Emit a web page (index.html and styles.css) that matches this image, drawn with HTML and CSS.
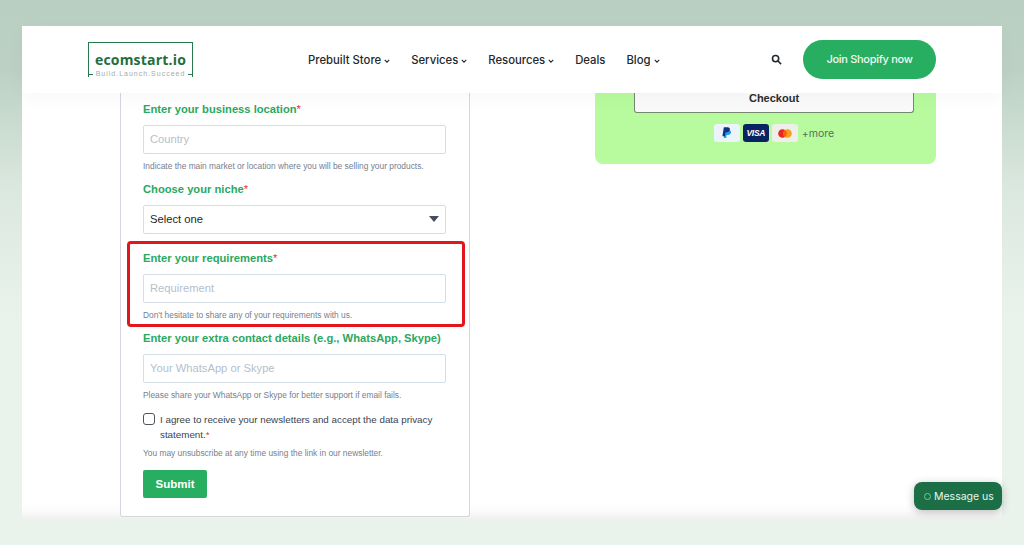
FILE: index.html
```html
<!DOCTYPE html>
<html lang="en">
<head>
    <meta charset="UTF-8">
    <meta name="viewport" content="width=device-width, initial-scale=1.0">
    <title>ecomstart.io - Request form</title>
    <link rel="stylesheet" href="styles.css">
</head>
<body>
    <div class="panel">
        <header class="site-header">
            <a class="logo" href="#">
                <span class="logo-name">ecomstart.io</span>
                <span class="logo-tag">Build.Launch.Succeed</span>
            </a>
            <nav class="nav">
                <a href="#">Prebuilt Store<svg class="caret" viewBox="0 0 8 5"><path d="M1 1l3 3 3-3"/></svg></a>
                <a href="#">Services<svg class="caret" viewBox="0 0 8 5"><path d="M1 1l3 3 3-3"/></svg></a>
                <a href="#">Resources<svg class="caret" viewBox="0 0 8 5"><path d="M1 1l3 3 3-3"/></svg></a>
                <a href="#">Deals</a>
                <a href="#">Blog<svg class="caret" viewBox="0 0 8 5"><path d="M1 1l3 3 3-3"/></svg></a>
            </nav>
            <svg class="search-icon" viewBox="0 0 12 12"><circle cx="5" cy="5" r="3.4"/><path d="M7.6 7.6L11 11"/></svg>
            <a class="join-btn" href="#">Join Shopify now</a>
        </header>

        <main class="content">
            <form class="form-card">
                <label class="field-label">Enter your business location<span class="req">*</span></label>
                <input class="field-input" type="text" placeholder="Country">
                <p class="hint">Indicate the main market or location where you will be selling your products.</p>

                <label class="field-label gap-top">Choose your niche<span class="req">*</span></label>
                <div class="field-input select-box">
                    <span>Select one</span>
                    <svg class="select-arrow" viewBox="0 0 10 6"><path d="M0 0h10L5 6z"/></svg>
                </div>

                <div class="highlight">
                    <label class="field-label">Enter your requirements<span class="req">*</span></label>
                    <input class="field-input" type="text" placeholder="Requirement">
                    <p class="hint">Don't hesitate to share any of your requirements with us.</p>
                </div>

                <label class="field-label">Enter your extra contact details (e.g., WhatsApp, Skype)</label>
                <input class="field-input" type="text" placeholder="Your WhatsApp or Skype">
                <p class="hint">Please share your WhatsApp or Skype for better support if email fails.</p>

                <div class="agree">
                    <input class="agree-box" type="checkbox">
                    <span>I agree to receive your newsletters and accept the data privacy statement.<span class="req">*</span></span>
                </div>
                <p class="hint hint-agree">You may unsubscribe at any time using the link in our newsletter.</p>

                <button class="submit-btn" type="button">Submit</button>
            </form>

            <aside class="summary">
                <div class="checkout-btn">Checkout</div>
                <div class="payments">
                    <span class="pay-card pay-paypal">
                        <svg viewBox="0 0 12 14" width="10" height="12">
                            <path fill="#1a9fe0" d="M3.6 3.6h4.6c1.8 0 2.9 1 2.6 2.8-.3 2-1.7 3-3.6 3H5.6L5 13H2.2z"/>
                            <path fill="#12307f" d="M2.2 0h4.600c2 0 3 1.100 2.700 2.900-.3 2.100-1.800 3.200-3.800 3.200H4.200L3.500 10.800H.5z"/>
                        </svg>
                    </span>
                    <span class="pay-card pay-visa">VISA</span>
                    <span class="pay-card pay-master">
                        <svg viewBox="0 0 14 9" width="14" height="9">
                            <circle cx="4.500" cy="4.500" r="4.300" fill="#e8281e"/>
                            <circle cx="9.500" cy="4.500" r="4.300" fill="#f79e1b"/>
                            <path fill="#f5600f" d="M7 1a4.300 4.300 0 0 1 0 7 4.300 4.300 0 0 1 0-7z"/>
                        </svg>
                    </span>
                    <span class="pay-more">+more</span>
                </div>
            </aside>
        </main>

        <a class="message-btn" href="#"><span class="message-dot"></span>Message us</a>
    </div>
</body>
</html>
```

FILE: styles.css
```css
html, body {
    height: 100%;
}
body {
    margin: 0;
    padding: 26px 22px;
    box-sizing: border-box;
    overflow: hidden;
    background: linear-gradient(180deg, #b9cfc1 0, #bcd1c4 70px, #dbe8df 190px, #e9f3ec 320px);
    font-family: "Liberation Sans", Arial, sans-serif;
}
a {
    text-decoration: none;
    color: inherit;
}
.panel {
    position: relative;
    height: 493px;
    background: #fff;
    box-shadow: inset 0 -14px 14px -12px rgba(0, 0, 0, 0.1);
}

/* header */
.site-header {
    position: relative;
    z-index: 2;
    display: flex;
    align-items: center;
    height: 67px;
    padding: 0 66px;
    background: #fff;
    box-shadow: 0 6px 18px rgba(0, 0, 0, 0.03);
}
.logo {
    display: flex;
    flex-direction: column;
    width: 105px;
    height: 35px;
    box-sizing: border-box;
    border: 1px solid #27784a;
    border-bottom: none;
    color: #1f6e40;
}
.logo-name {
    font-family: "Open Sans", sans-serif;
    font-weight: 700;
    font-size: 14px;
    line-height: 20px;
    margin-top: 7px;
    text-align: center;
    letter-spacing: 0.2px;
}
.logo-tag {
    display: flex;
    align-items: center;
    gap: 3px;
    margin: 0 -1px;
    font-size: 7px;
    line-height: 8px;
    letter-spacing: 1px;
    color: #a3aca6;
    white-space: nowrap;
}
.logo-tag::before, .logo-tag::after {
    content: "";
    flex: 1;
    height: 1px;
    background: #27784a;
}
.nav {
    display: flex;
    gap: 21px;
    margin-left: 115px;
    font-family: Inter, sans-serif;
    font-weight: 500;
    font-size: 11.300px;
    color: #23282d;
}
.caret {
    width: 6px;
    height: 4px;
    margin-left: 3px;
    fill: none;
    stroke: #23282d;
    stroke-width: 1.500;
    vertical-align: 1px;
}
.search-icon {
    width: 11px;
    height: 11px;
    margin-left: auto;
    fill: none;
    stroke: #23282d;
    stroke-width: 1.700;
}
.join-btn {
    width: 133px;
    height: 39px;
    margin-left: 21px;
    border-radius: 20px;
    background: #27ae60;
    color: #f0faf3;
    font-family: Inter, sans-serif;
    font-weight: 500;
    font-size: 11px;
    letter-spacing: -0.300px;
    line-height: 39px;
    text-align: center;
}

/* content */
.content {
    display: flex;
    justify-content: space-between;
    align-items: flex-start;
    padding: 0 66px 0 98px;
}
.form-card {
    width: 350px;
    box-sizing: border-box;
    padding: 8px 23px 18px 22px;
    background: #fff;
    border: 1px solid #d3d8de;
    border-top: none;
    border-radius: 0 0 3px 3px;
}
.field-label {
    display: block;
    height: 16px;
    margin-bottom: 8px;
    font-weight: bold;
    font-size: 11.200px;
    line-height: 17px;
    color: #2aa85f;
    white-space: nowrap;
}
.gap-top {
    margin-top: 9px;
}
.req {
    color: #e8304a;
    font-weight: normal;
}
.field-input {
    display: block;
    width: 303px;
    height: 29px;
    box-sizing: border-box;
    margin: 0;
    padding: 0 6px 2px;
    background: #fff;
    border: 1px solid #d5dde5;
    border-radius: 2px;
    font-family: "Liberation Sans", Arial, sans-serif;
    font-size: 11.200px;
}
.field-input::placeholder {
    color: #b4bfcc;
}
.select-box {
    display: flex;
    align-items: center;
    justify-content: space-between;
    padding-right: 6px;
    color: #1c1f24;
}
.select-arrow {
    width: 10px;
    height: 6px;
    fill: #454d5e;
}
.hint {
    height: 12px;
    margin: 6px 0 0;
    font-size: 8.400px;
    line-height: 12px;
    color: #76808e;
    white-space: nowrap;
}
.highlight {
    margin: 7px -19px 3px -16px;
    padding: 6px 16px 3px 13px;
    border: 3px solid #e3151d;
    border-radius: 4px;
}
.agree {
    display: flex;
    gap: 5px;
    margin-top: 11px;
    font-size: 9.800px;
    line-height: 15px;
    color: #3a4350;
}
.agree-box {
    flex: none;
    width: 12px;
    height: 12px;
    margin: 1px 0 0;
    appearance: none;
    background: #fff;
    border: 1px solid #4d5560;
    border-radius: 3px;
}
.hint-agree {
    margin-top: 5px;
}
.submit-btn {
    display: block;
    width: 64px;
    height: 28px;
    margin-top: 11px;
    padding: 0;
    background: #27ae60;
    border: none;
    border-radius: 2px;
    color: #fff;
    font-family: "Liberation Sans", Arial, sans-serif;
    font-weight: bold;
    font-size: 11.500px;
}

/* order summary */
.summary {
    width: 341px;
    height: 71px;
    box-sizing: border-box;
    padding: 0 22px 0 39px;
    background: #b8fb9e;
    border-radius: 0 0 8px 8px;
}
.checkout-btn {
    height: 20px;
    box-sizing: border-box;
    background: #fafafa;
    border: 1px solid #75876c;
    border-top: none;
    border-radius: 0 0 3px 3px;
    font-weight: bold;
    font-size: 11px;
    line-height: 11px;
    text-align: center;
    color: #2c2c2c;
}
.payments {
    display: flex;
    align-items: center;
    justify-content: center;
    gap: 3px;
    margin-top: 11px;
}
.pay-card {
    display: flex;
    align-items: center;
    justify-content: center;
    width: 26px;
    height: 18px;
    border-radius: 3px;
}
.pay-paypal {
    background: #edf3fb;
}
.pay-visa {
    background: #0a2463;
    color: #fff;
    font-weight: bold;
    font-style: italic;
    font-size: 8.500px;
    letter-spacing: -0.300px;
}
.pay-master {
    background: #eeefea;
}
.pay-more {
    margin-left: 1px;
    font-family: Inter, sans-serif;
    font-size: 10.500px;
    color: #55705a;
}

/* chat button */
.message-btn {
    position: absolute;
    right: 0;
    bottom: 9px;
    z-index: 3;
    display: flex;
    align-items: center;
    gap: 3px;
    width: 88px;
    height: 28px;
    box-sizing: border-box;
    padding-left: 10px;
    background: #1b6e46;
    border-radius: 8px;
    box-shadow: 0 2px 8px rgba(0, 0, 0, 0.25);
    color: #eaf5ee;
    font-family: Inter, sans-serif;
    font-size: 10.500px;
}
.message-dot {
    width: 5px;
    height: 5px;
    border: 1px solid #6fcf97;
    border-radius: 50%;
}
```
